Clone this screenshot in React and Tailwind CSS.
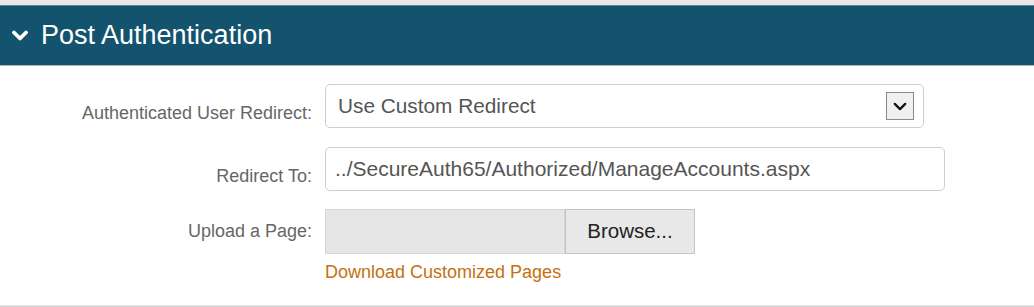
import React from 'react';

function Chevron({ className, strokeWidth = 3 }) {
  return (
    <svg viewBox="0 0 16 10" className={className} fill="none" stroke="currentColor" strokeWidth={strokeWidth} strokeLinecap="round" strokeLinejoin="round">
      <path d="M2 2 L8 8 L14 2" />
    </svg>
  );
}

function Label({ children, low }) {
  return (
    <div className={`w-[313px] shrink-0 text-right text-[18px] text-[#666] pr-[1px] ${low ? 'pt-[14px]' : ''}`}>
      {children}
    </div>
  );
}

export default function App() {
  return (
    <div className="w-[1034px] h-[307px] bg-white overflow-hidden font-['Liberation_Sans',Arial,sans-serif]">
      {/* top strip */}
      <div className="h-[6px] bg-[#e8e8e8] border-b border-[#5f8798]"></div>

      {/* header */}
      <div className="h-[60px] bg-[#13536e] border-b border-[#a9b4bc] flex items-center pl-[12px]">
        <Chevron className="w-[16px] h-[11px] text-white mr-[13px]" strokeWidth={3.8} />
        <h1 className="text-[27px] text-white leading-none">Post Authentication</h1>
      </div>

      {/* form */}
      <div className="flex flex-col pt-[18px]">
        <div className="flex items-center gap-[12px]">
          <Label low>Authenticated User Redirect:</Label>
          <div className="w-[599px] h-[44px] border border-[#cfcfcf] rounded-[5px] flex items-center justify-between pl-[12px] pr-[9px]">
            <span className="text-[20.8px] text-[#555]">Use Custom Redirect</span>
            <div className="w-[28px] h-[28px] border border-[#8a8a8a] bg-[#f0f0f0] flex items-center justify-center">
              <Chevron className="w-[14px] h-[9px] text-[#111]" strokeWidth={2.6} />
            </div>
          </div>
        </div>

        <div className="flex items-center gap-[12px] mt-[19px]">
          <Label low>Redirect To:</Label>
          <div className="w-[620px] h-[44px] border border-[#cfcfcf] rounded-[5px] flex items-center pl-[9px]">
            <span className="text-[21px] text-[#555]">../SecureAuth65/Authorized/ManageAccounts.aspx</span>
          </div>
        </div>

        <div className="flex items-center gap-[12px] mt-[18px]">
          <Label>Upload a Page:</Label>
          <div className="flex h-[45px]">
            <div className="w-[240px] bg-[#e6e6e6] border border-[#d6d6d6]"></div>
            <button className="w-[130px] bg-[#e8e8e8] border border-[#c4c4c4] text-[20.5px] text-[#222]">Browse...</button>
          </div>
        </div>

        <div className="pl-[325px] mt-[5px]">
          <a className="text-[18px] text-[#c6700f]">Download Customized Pages</a>
        </div>
      </div>

      <div className="mt-[19px] h-[3px] bg-[#d4d4d4] border-t border-[#e6e6e6]"></div>
    </div>
  );
}
